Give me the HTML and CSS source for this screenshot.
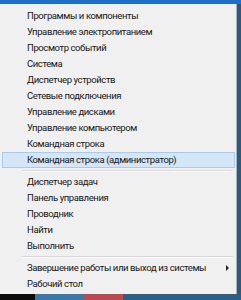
FILE: index.html
```html
<!DOCTYPE html>
<html lang="ru">
<head>
    <meta charset="UTF-8">
    <meta name="viewport" content="width=device-width, initial-scale=1.0">
    <title>Меню Win+X</title>
    <link rel="stylesheet" href="styles.css">
</head>
<body>

    <div class="topbar"></div>

    <div class="screen">
        <ul class="menu">
            <li class="item">Программы и компоненты</li>
            <li class="item">Управление электропитанием</li>
            <li class="item">Просмотр событий</li>
            <li class="item">Система</li>
            <li class="item">Диспетчер устройств</li>
            <li class="item">Сетевые подключения</li>
            <li class="item">Управление дисками</li>
            <li class="item">Управление компьютером</li>
            <li class="item">Командная строка</li>
            <li class="item active">Командная строка (администратор)</li>
            <li class="sep"></li>
            <li class="item">Диспетчер задач</li>
            <li class="item">Панель управления</li>
            <li class="item">Проводник</li>
            <li class="item">Найти</li>
            <li class="item">Выполнить</li>
            <li class="sep"></li>
            <li class="item sub">Завершение работы или выход из системы <span class="arrow"></span></li>
            <li class="item">Рабочий стол</li>
        </ul>
        <div class="edge"></div>
    </div>

    <div class="taskbar">
        <span class="tb-black"></span>
        <span class="tb-blue"></span>
        <span class="tb-red"></span>
        <span class="tb-steel"></span>
    </div>

</body>
</html>
```

FILE: styles.css
```css
html, body {
    margin: 0;
    padding: 0;
}
body {
    width: 241px;
    height: 300px;
    overflow: hidden;
    background: #2d5878;
    font-family: Roboto, "Noto Sans", sans-serif;
    font-size: 9.5px;
    letter-spacing: -0.4px;
    color: #161616;
}
.topbar {
    height: 4px;
    background: #1f70c4;
}
.screen {
    display: flex;
    height: 290px;
}
.menu {
    list-style: none;
    margin: 0;
    padding: 4px 0 2px 0;
    width: 237px;
    background: #f0f0f0;
    border-right: 1px solid #a9b2bb;
    box-sizing: border-box;
}
.edge {
    flex: 1;
    background: #2b5a7d;
}
.item {
    height: 16px;
    line-height: 16px;
    padding-left: 25px;
    margin: 0 1px 0 2px;
    box-sizing: border-box;
    white-space: nowrap;
    position: relative;
}
.item.active {
    background: #d5e6f7;
    border: 1px solid #a6cbee;
    line-height: 14px;
    padding-left: 24px;
}
.sep {
    height: 6px;
    margin-left: 22px;
    margin-right: 3px;
    background: linear-gradient(#f0f0f0 2px, #d9d9d9 2px, #d9d9d9 3px, #fbfbfb 3px, #fbfbfb 4px, #f0f0f0 4px);
}
.arrow {
    position: absolute;
    right: 6px;
    top: 5px;
    width: 0;
    height: 0;
    border-top: 3px solid transparent;
    border-bottom: 3px solid transparent;
    border-left: 3px solid #222;
}
.taskbar {
    display: flex;
    height: 6px;
}
.tb-black {
    width: 35px;
    background: #0d0d0d;
}
.tb-blue {
    width: 48px;
    background: #3d77a6;
}
.tb-red {
    width: 40px;
    background: #b94a4f;
}
.tb-steel {
    flex: 1;
    background: #2d5f86;
}
```
